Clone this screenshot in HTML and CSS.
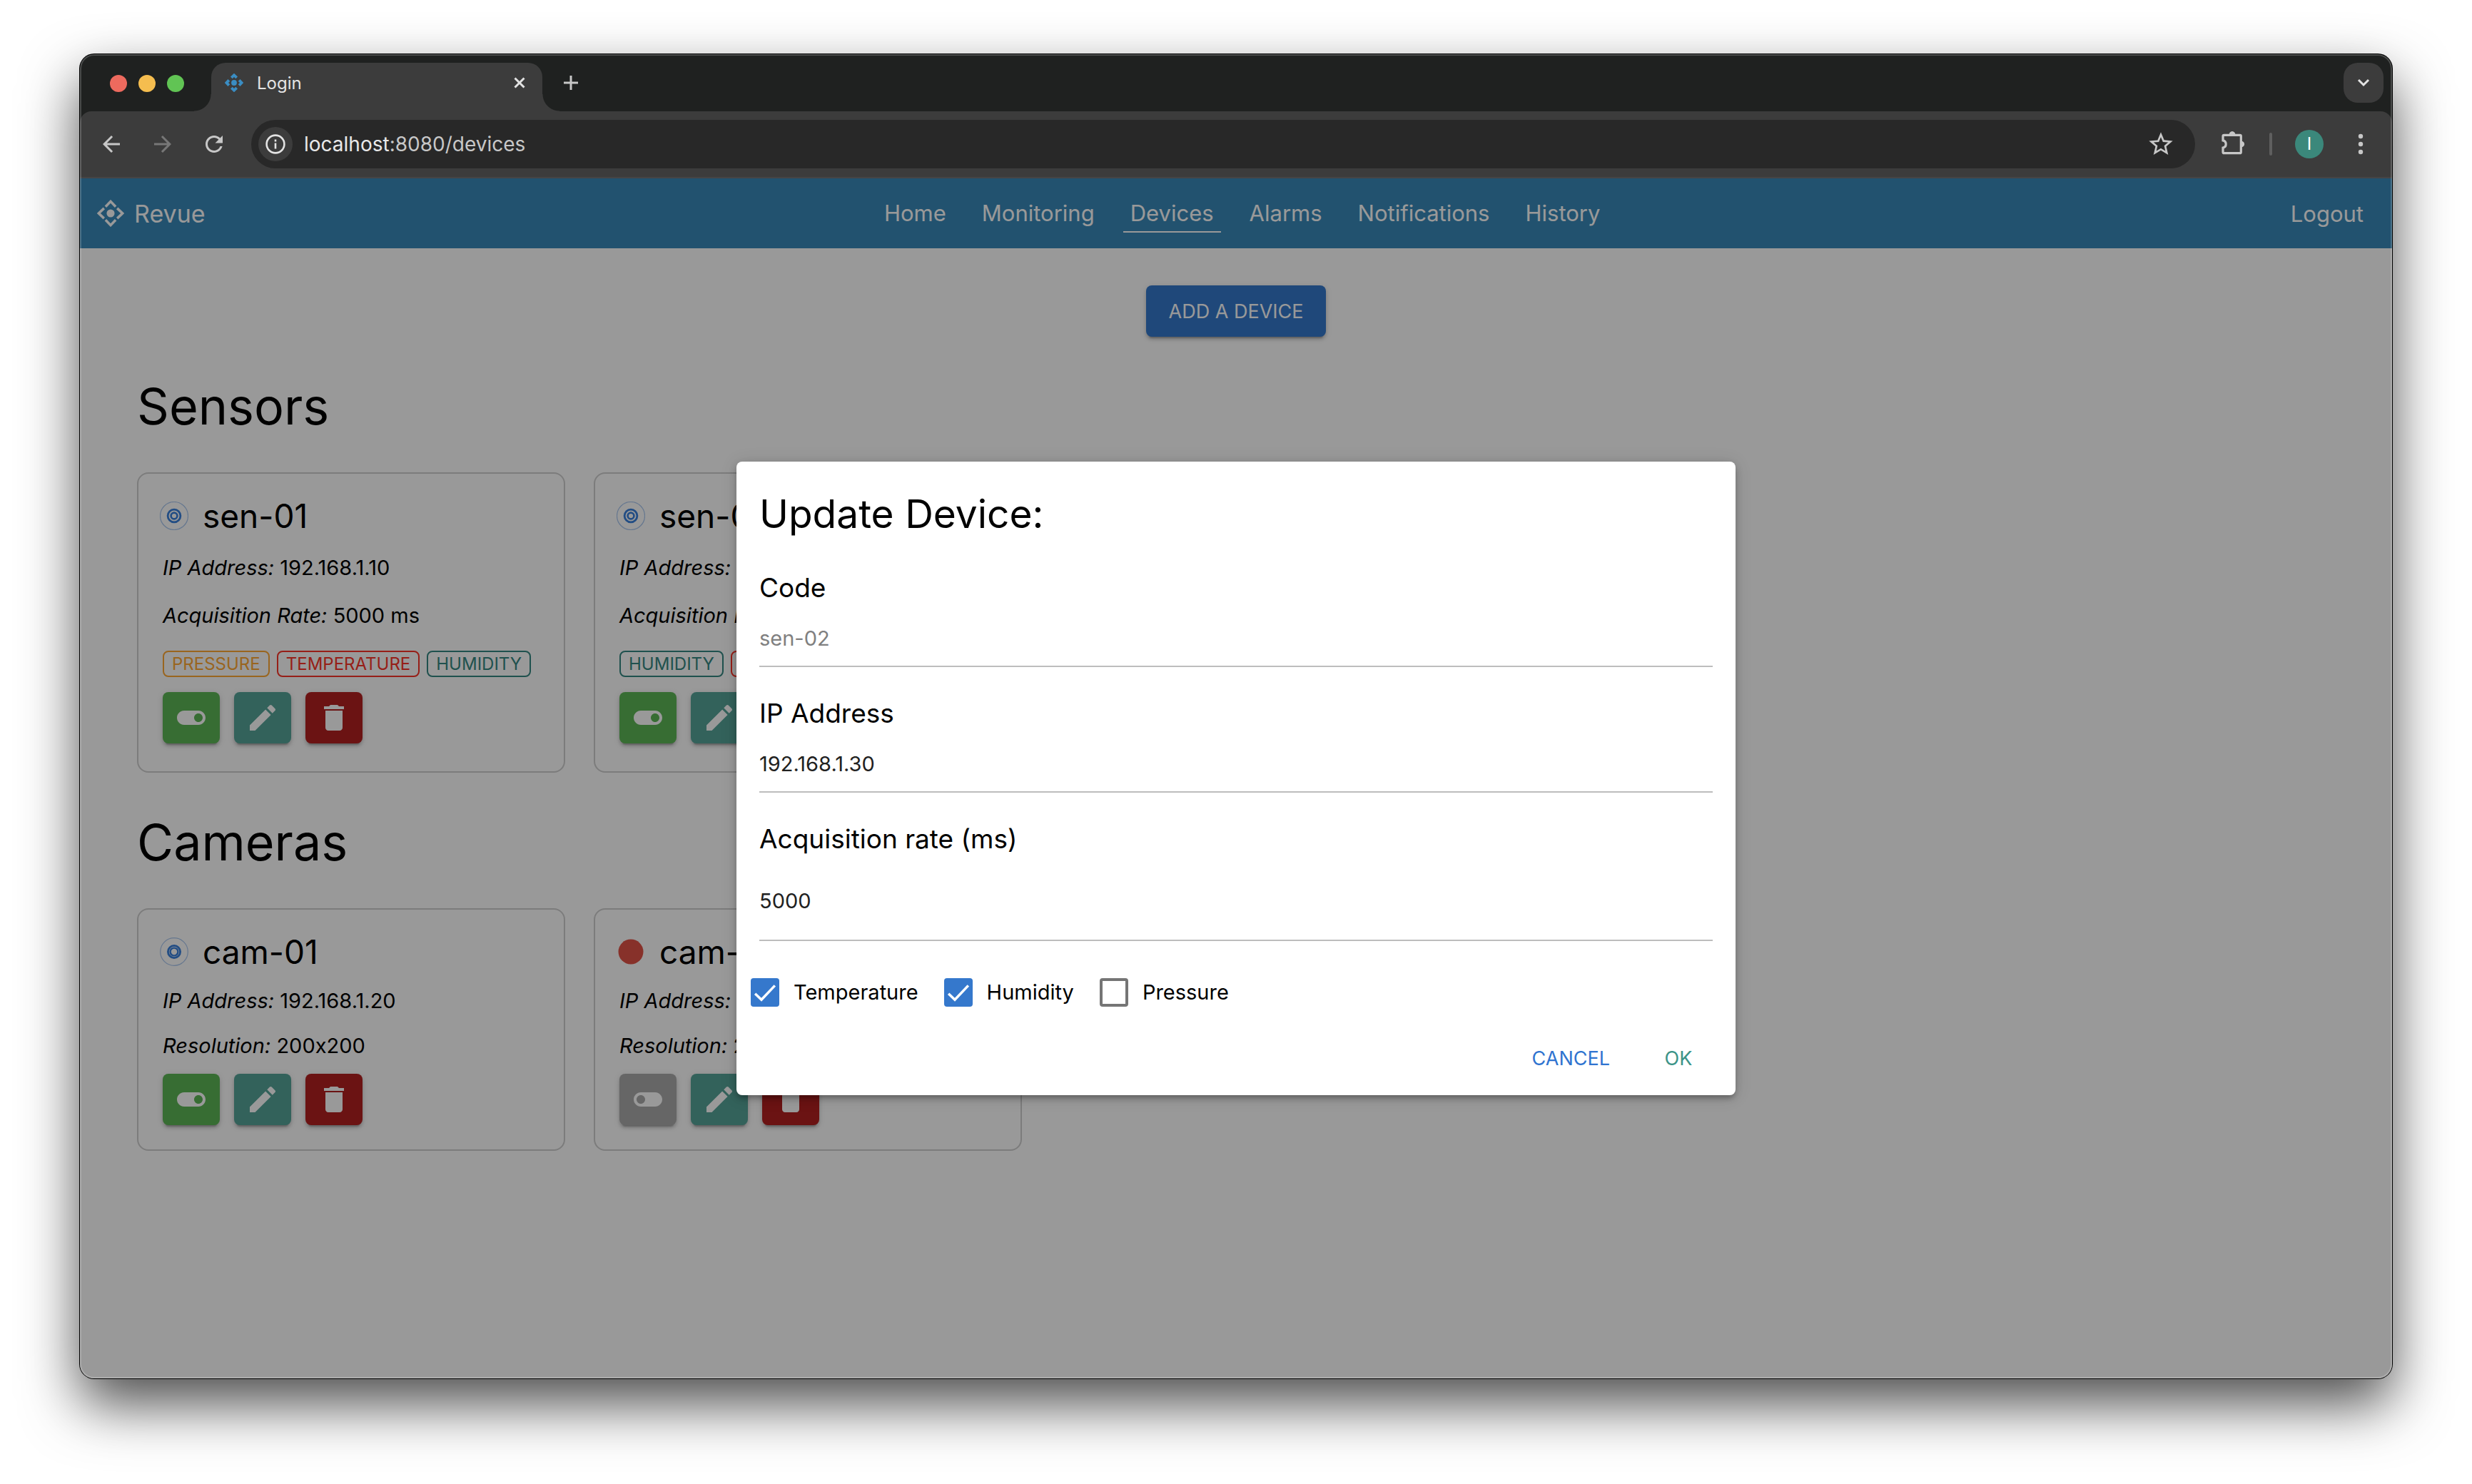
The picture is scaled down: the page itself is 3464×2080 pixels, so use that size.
FILE: index.html
```html
<!DOCTYPE html>
<html lang="en">
<head>
  <meta charset="utf-8">
  <meta name="viewport" content="width=device-width, initial-scale=1">
  <title>Login</title>
  <link rel="stylesheet" href="styles.css">
</head>
<body>
<svg class="sprite" aria-hidden="true">
  <symbol id="toggle-on" viewBox="0 0 24 24"><path d="M17 7H7c-2.76 0-5 2.24-5 5s2.24 5 5 5h10c2.76 0 5-2.24 5-5s-2.24-5-5-5zm0 8c-1.66 0-3-1.34-3-3s1.34-3 3-3 3 1.34 3 3-1.34 3-3 3z"/></symbol>
  <symbol id="toggle-off" viewBox="0 0 24 24"><path d="M17 7H7c-2.76 0-5 2.24-5 5s2.24 5 5 5h10c2.76 0 5-2.24 5-5s-2.24-5-5-5zM7 15c-1.66 0-3-1.34-3-3s1.34-3 3-3 3 1.34 3 3-1.34 3-3 3z"/></symbol>
  <symbol id="edit" viewBox="0 0 24 24"><path d="M3 17.25V21h3.75L17.81 9.94l-3.75-3.75L3 17.25zM20.71 7.04c.39-.39.39-1.02 0-1.41l-2.34-2.34c-.39-.39-1.02-.39-1.41 0l-1.83 1.83 3.75 3.75 1.83-1.83z"/></symbol>
  <symbol id="delete" viewBox="0 0 24 24"><path d="M6 19c0 1.1.9 2 2 2h8c1.1 0 2-.9 2-2V7H6v12zM19 4h-3.5l-1-1h-5l-1 1H5v2h14V4z"/></symbol>
  <symbol id="status-on" viewBox="0 0 40 40"><g fill="none"><circle cx="20" cy="20" r="19.5" stroke="#a9c6ee" stroke-width="1.2"/><circle cx="20" cy="20" r="8.9" stroke="#3a80dc" stroke-width="2.8"/><circle cx="20" cy="20" r="4.4" stroke="#3a80dc" stroke-width="2.6"/></g></symbol>
  <symbol id="status-on-tight" viewBox="0 0 40 40"><g fill="none"><circle cx="20" cy="20" r="19.3" stroke="#a9c6ee" stroke-width="1.2"/><circle cx="20" cy="20" r="8.6" stroke="#3a80dc" stroke-width="2.8"/><circle cx="20" cy="20" r="5.4" stroke="#3a80dc" stroke-width="2.4"/></g></symbol>
  <symbol id="status-off" viewBox="0 0 40 40"><circle cx="20" cy="20" r="17.5" fill="#e15346"/></symbol>
</svg>

<div class="window">
  <div class="tabstrip">
    <div class="lights"><span class="light light-red"></span><span class="light light-yellow"></span><span class="light light-green"></span></div>
    <div class="tab">
      <svg class="favicon" viewBox="0 0 24 24"><path d="M8.6 5.4 12 2.2l3.4 3.2M8.6 18.6l3.4 3.2 3.4-3.2M5.4 8.6 2.2 12l3.2 3.4M18.6 8.6l3.2 3.4-3.2 3.4" fill="none" stroke="#3a8dc3" stroke-width="3.6"/><circle cx="12" cy="12" r="3.6" fill="#3a8dc3"/></svg>
      <span class="tab-title">Login</span>
      <button class="bare" type="button" aria-label="Close tab"><svg class="icon-close" viewBox="0 0 16 16"><path d="M1.5 1.5l13 13M14.5 1.5l-13 13"/></svg></button>
    </div>
    <button class="bare new-tab" type="button" aria-label="New tab"><svg class="icon-plus" viewBox="0 0 20 20"><path d="M10 0v20M0 10h20"/></svg></button>
    <button class="tab-search" type="button" aria-label="Search tabs"><svg viewBox="0 0 18 12"><path d="M2 2l7 7 7-7"/></svg></button>
  </div>

  <div class="toolbar">
    <div class="history">
      <button class="bare" type="button" aria-label="Back"><svg class="glyph" viewBox="0 0 24 24"><path d="M20 11H7.83l5.59-5.59L12 4l-8 8 8 8 1.41-1.41L7.83 13H20v-2z"/></svg></button>
      <button class="bare" type="button" aria-label="Forward"><svg class="glyph glyph-dim" viewBox="0 0 24 24"><path d="M12 4l-1.41 1.41L16.17 11H4v2h12.17l-5.58 5.59L12 20l8-8z"/></svg></button>
      <button class="bare" type="button" aria-label="Reload"><svg class="glyph" viewBox="0 0 24 24"><path d="M17.65 6.35C16.2 4.9 14.21 4 12 4c-4.42 0-7.99 3.58-8 8s3.57 8 8 8c3.73 0 6.84-2.55 7.73-6h-2.08c-.82 2.33-3.04 4-5.65 4-3.31 0-6-2.69-6-6s2.69-6 6-6c1.66 0 3.14.69 4.22 1.78L13 11h7V4l-2.35 2.35z"/></svg></button>
    </div>
    <div class="address">
      <span class="site-info"><svg viewBox="0 0 28 28"><circle cx="14" cy="14" r="12.4" fill="none" stroke="#e3e3e3" stroke-width="2.6"/><path d="M12.7 12.6h2.6v8h-2.6zM12.7 7.6h2.6v2.8h-2.6z" fill="#e3e3e3"/></svg></span>
      <span class="url"><span class="host">localhost</span>:8080/devices</span>
      <button class="bare" type="button" aria-label="Bookmark"><svg class="glyph-large" viewBox="0 0 24 24"><path d="M22 9.24l-7.19-.62L12 2 9.19 8.63 2 9.24l5.46 4.73L5.82 21 12 17.27 18.18 21l-1.63-7.03L22 9.24zM12 15.4l-3.76 2.27 1-4.28-3.32-2.88 4.38-.38L12 6.1l1.71 4.04 4.38.38-3.32 2.88 1 4.28L12 15.4z"/></svg></button>
    </div>
    <button class="bare" type="button" aria-label="Extensions"><svg class="glyph-large" viewBox="-1 0 40 40"><path d="M7.5 7.3h22.3a1.5 1.5 0 0 1 1.5 1.5v22.4a1.5 1.5 0 0 1-1.5 1.5H7.5A1.5 1.5 0 0 1 6 31.2v-6.100a5.200 5.200 0 0 0 0-10.200V8.800a1.500 1.500 0 0 1 1.500-1.500z" fill="none" stroke="#c7c7c7" stroke-width="3.2"/><path d="M14.500 7.300a4.500 5.200 0 0 1 9 0zM31.300 15.500a6 4.600 0 0 1 0 9z"/></svg></button>
    <span class="divider"></span>
    <span class="avatar">I</span>
    <button class="bare" type="button" aria-label="Menu"><svg class="glyph-large" viewBox="0 0 40 40"><circle cx="20" cy="9" r="3.200"/><circle cx="20" cy="20" r="3.200"/><circle cx="20" cy="31" r="3.200"/></svg></button>
  </div>

  <div class="viewport">
    <header class="navbar">
      <a class="brand" href="#">
        <svg viewBox="0 0 24 24"><path d="M7.500 6.200 12 1.500 16.500 6.200M7.500 17.800l4.500 4.700 4.500-4.700M6.200 7.500 1.500 12 6.200 16.500M17.800 7.500l4.700 4.500-4.700 4.500" fill="none" stroke="#fff" stroke-width="2.200"/><circle cx="12" cy="12" r="3.500"/></svg>
        Revue
      </a>
      <nav class="links">
        <a href="#">Home</a><a href="#">Monitoring</a><a href="#" class="active">Devices</a><a href="#">Alarms</a><a href="#">Notifications</a><a href="#">History</a>
      </nav>
      <a class="logout" href="#">Logout</a>
    </header>

    <main class="content">
      <button class="add" type="button">ADD A DEVICE</button>

      <h1>Sensors</h1>
      <section class="cards">
        <article class="card sensor">
          <h2><svg><use href="#status-on"/></svg>sen-01</h2>
          <div class="specs"><p><em>IP Address:</em> 192.168.1.10</p><p><em>Acquisition Rate:</em> 5000 ms</p></div>
          <div class="chips"><span class="chip pressure">PRESSURE</span><span class="chip temperature">TEMPERATURE</span><span class="chip humidity">HUMIDITY</span></div>
          <div class="actions">
            <button class="action on" type="button" aria-label="Disable"><svg><use href="#toggle-on"/></svg></button>
            <button class="action edit" type="button" aria-label="Edit"><svg><use href="#edit"/></svg></button>
            <button class="action remove" type="button" aria-label="Delete"><svg><use href="#delete"/></svg></button>
          </div>
        </article>
        <article class="card sensor">
          <h2><svg><use href="#status-on"/></svg>sen-02</h2>
          <div class="specs"><p><em>IP Address:</em> 192.168.1.30</p><p><em>Acquisition Rate:</em> 5000 ms</p></div>
          <div class="chips"><span class="chip humidity">HUMIDITY</span><span class="chip temperature">TEMPERATURE</span></div>
          <div class="actions">
            <button class="action on" type="button" aria-label="Disable"><svg><use href="#toggle-on"/></svg></button>
            <button class="action edit" type="button" aria-label="Edit"><svg><use href="#edit"/></svg></button>
            <button class="action remove" type="button" aria-label="Delete"><svg><use href="#delete"/></svg></button>
          </div>
        </article>
      </section>

      <h1>Cameras</h1>
      <section class="cards">
        <article class="card">
          <h2><svg><use href="#status-on-tight"/></svg>cam-01</h2>
          <div class="specs"><p><em>IP Address:</em> 192.168.1.20</p><p><em>Resolution:</em> 200x200</p></div>
          <div class="actions">
            <button class="action on" type="button" aria-label="Disable"><svg><use href="#toggle-on"/></svg></button>
            <button class="action edit" type="button" aria-label="Edit"><svg><use href="#edit"/></svg></button>
            <button class="action remove" type="button" aria-label="Delete"><svg><use href="#delete"/></svg></button>
          </div>
        </article>
        <article class="card">
          <h2><svg><use href="#status-off"/></svg>cam-02</h2>
          <div class="specs"><p><em>IP Address:</em> 192.168.1.40</p><p><em>Resolution:</em> 200x200</p></div>
          <div class="actions">
            <button class="action off" type="button" aria-label="Enable"><svg><use href="#toggle-off"/></svg></button>
            <button class="action edit" type="button" aria-label="Edit"><svg><use href="#edit"/></svg></button>
            <button class="action remove" type="button" aria-label="Delete"><svg><use href="#delete"/></svg></button>
          </div>
        </article>
      </section>
    </main>

    <div class="backdrop">
      <form class="dialog" role="dialog" aria-labelledby="dialog-title">
        <div class="dialog-body">
          <h2 class="dialog-title" id="dialog-title">Update Device:</h2>
          <div class="field"><label for="code">Code</label><input id="code" type="text" value="sen-02" disabled></div>
          <div class="field"><label for="ip">IP Address</label><input id="ip" type="text" value="192.168.1.30"></div>
          <div class="field tall"><label for="rate">Acquisition rate (ms)</label><input id="rate" type="text" inputmode="numeric" value="5000"></div>
          <div class="checks">
            <label><input type="checkbox" checked>Temperature</label>
            <label><input type="checkbox" checked>Humidity</label>
            <label><input type="checkbox">Pressure</label>
          </div>
        </div>
        <div class="dialog-actions">
          <button class="cancel" type="button">CANCEL</button>
          <button class="ok" type="button">OK</button>
        </div>
      </form>
    </div>
  </div>
</div>
</body>
</html>
```
FILE: styles.css
```css
*, *::before, *::after { box-sizing: border-box; }

body {
  margin: 0;
  min-height: 100vh;
  padding: 76px 112px 148px;
  display: flex;
  background: #fff;
  color: #000;
  font-family: Inter, "Liberation Sans", sans-serif;
  font-size: 28px;
  font-feature-settings: "calt" 0;
}

h1, h2, p { margin: 0; font-weight: 400; }
a { color: inherit; text-decoration: none; }
button, input { font: inherit; color: inherit; margin: 0; }
button { border: 0; padding: 0; background: none; display: flex; align-items: center; justify-content: center; }
svg { display: block; fill: currentColor; flex: none; }
.sprite { position: absolute; width: 0; height: 0; }

/* Browser window */
.window {
  position: relative;
  flex: 1;
  min-width: 0;
  display: flex;
  flex-direction: column;
  overflow: hidden;
  border-radius: 20px;
  background: #1f2120;
  box-shadow: 0 0 0 1px #000, 0 36px 80px rgba(0, 0, 0, .7);
}
.window::after {
  content: "";
  position: absolute;
  inset: 0;
  border-radius: inherit;
  box-shadow: inset 0 0 0 2px rgba(255, 255, 255, .2);
  pointer-events: none;
}

.tabstrip { display: flex; height: 80px; padding: 12px 12px 0 42px; }
.lights { display: flex; align-items: center; gap: 16px; height: 58px; margin-right: 38px; }
.light { width: 24px; height: 24px; border-radius: 50%; }
.light-red { background: #ed6a5e; }
.light-yellow { background: #f5bd4f; }
.light-green { background: #61c454; }

.tab {
  position: relative;
  display: flex;
  align-items: center;
  gap: 19px;
  width: 464px;
  padding: 0 24px 12px 19px;
  border-radius: 20px 20px 0 0;
  background: #3c3c3c;
  color: #e3e3e3;
  font-size: 24px;
}
.tab::before, .tab::after {
  content: "";
  position: absolute;
  bottom: 0;
  width: 24px;
  height: 24px;
}
.tab::before { right: 100%; background: radial-gradient(circle at 0 0, transparent 23px, #3c3c3c 24px); }
.tab::after { left: 100%; background: radial-gradient(circle at 100% 0, transparent 23px, #3c3c3c 24px); }
.favicon { width: 26px; height: 26px; }
.tab-title { flex: 1; }
.icon-close { width: 16px; height: 16px; stroke: #e3e3e3; stroke-width: 3; }
.new-tab { height: 56px; margin-left: 30px; }
.icon-plus { width: 20px; height: 20px; stroke: #c7c7c7; stroke-width: 3; }
.tab-search { width: 56px; height: 56px; margin-left: auto; border-radius: 20px; background: #3c3c3c; }
.tab-search svg { width: 18px; height: 12px; fill: none; stroke: #e3e3e3; stroke-width: 3; }

.toolbar {
  display: flex;
  align-items: center;
  gap: 32px;
  height: 94px;
  padding: 0 24px 0 26px;
  border-bottom: 2px solid #454545;
  border-radius: 16px 16px 0 0;
  background: #3c3c3c;
  color: #c7c7c7;
}
.history { display: flex; gap: 36px; margin-right: 2px; }
.glyph { width: 36px; height: 36px; }
.glyph-dim { color: #777; }
.glyph-large { width: 40px; height: 40px; }
.address {
  flex: 1;
  display: flex;
  align-items: center;
  gap: 16px;
  height: 68px;
  padding: 0 28px 0 10px;
  border-radius: 34px;
  background: #282828;
}
.site-info { display: grid; place-items: center; width: 48px; height: 48px; border-radius: 50%; background: #3c3c3c; }
.site-info svg { width: 28px; height: 28px; }
.url { flex: 1; }
.host { color: #e8e8e8; }
.divider { width: 4px; height: 32px; border-radius: 2px; background: #5f5f5f; }
.avatar {
  width: 40px;
  border-radius: 50%;
  background: #3b887b;
  color: #fff;
  font-size: 24px;
  line-height: 40px;
  text-align: center;
}

/* Page */
.viewport { position: relative; flex: 1; background: #fff; }
.navbar {
  display: flex;
  align-items: center;
  justify-content: space-between;
  height: 98px;
  padding: 0 24px;
  background: #3a89b9;
  color: #fff;
  font-size: 31px;
}
.brand { display: flex; align-items: center; gap: 14px; font-size: 34px; }
.brand svg { width: 38px; height: 38px; }
.links { display: flex; gap: 30px; }
.links a { padding: 0 10px; line-height: 50px; border: solid transparent; border-width: 2px 0; }
.links .active { border-bottom-color: #fff; }
.logout { padding: 0 16px; }

.content { padding: 52px 80px; }
.add {
  height: 72px;
  margin: 0 auto;
  padding: 0 32px;
  border-radius: 8px;
  background: #3578cb;
  color: #fff;
  font-size: 27px;
}
.add, .action {
  box-shadow: 0 6px 2px -4px rgba(0, 0, 0, .2), 0 4px 4px rgba(0, 0, 0, .14), 0 2px 10px rgba(0, 0, 0, .12);
}
h1 { margin: 50px 0 44px; font-size: 70px; line-height: 96px; }

.cards { display: flex; gap: 40px; }
.card { width: 600px; padding: 30px 34px 34px; border: 2px solid #cfcfcf; border-radius: 16px; }
.card h2 { display: flex; align-items: center; gap: 20px; margin-left: -4px; font-size: 46px; line-height: 58px; }
.card h2 svg { width: 40px; height: 40px; }
.specs { display: grid; gap: 27px; margin: 22px 0 21px; font-size: 29px; line-height: 36px; }
.sensor { padding-bottom: 39px; }
.sensor .specs { gap: 31px; margin: 26px 0 31px; }

.chips { display: flex; gap: 10px; margin-bottom: 21px; }
.chip { padding: 0 11px; border: 2px solid; border-radius: 8px; font-size: 24px; line-height: 33px; }
.pressure { color: #ffa935; }
.temperature { color: #fa3528; }
.humidity { color: #358882; }

.actions { display: flex; gap: 20px; }
.action { width: 80px; height: 72px; border-radius: 8px; color: #fff; }
.action svg { width: 48px; height: 48px; }
.on { background: #5db655; }
.off { background: #aaa; }
.edit { background: #55a398; }
.remove { background: #b22121; }

/* Dialog */
.backdrop { position: absolute; inset: 0; display: grid; place-items: center; background: rgba(0, 0, 0, .4); }
.dialog {
  width: 1400px;
  max-width: 90%;
  border-radius: 8px;
  background: #fff;
  box-shadow: 0 6px 6px -2px rgba(0, 0, 0, .2), 0 4px 12px rgba(0, 0, 0, .14), 0 2px 24px rgba(0, 0, 0, .12);
}
.dialog-body { padding: 37px 32px 36px; }
.dialog-title { margin-bottom: 44px; font-size: 55px; line-height: 72px; }
.field { display: grid; gap: 8px; margin-bottom: 41px; }
.field label { font-size: 37px; line-height: 48px; }
.field input {
  width: 100%;
  height: 79px;
  padding: 0;
  border: 0;
  border-bottom: 2px solid #bdbdbd;
  border-radius: 0;
  background: none;
  color: #212121;
  font-size: 29px;
}
.field input:disabled { color: #808080; }
.tall input { height: 111px; }
.checks { display: flex; gap: 36px; margin: 52px 0 0 -12px; font-size: 29px; line-height: 40px; }
.checks label { display: flex; gap: 20px; }
.checks input { appearance: none; width: 40px; height: 40px; border: 4px solid #757575; border-radius: 4px; }
.checks input:checked {
  border: 0;
  background: #3578cc url("data:image/svg+xml,%3Csvg xmlns='http://www.w3.org/2000/svg' viewBox='0 0 24 24' fill='none' stroke='white' stroke-width='2.1'%3E%3Cpath d='M3.700 13 9 18.100 20.300 6.200'/%3E%3C/svg%3E");
}
.dialog-actions { display: flex; justify-content: flex-end; gap: 16px; padding: 0 16px 16px; }
.dialog-actions button { min-width: 128px; height: 72px; padding: 0 16px; border-radius: 8px; font-size: 27px; }
.cancel { color: #2f74d0; }
.ok { color: #3c9488; }
```
